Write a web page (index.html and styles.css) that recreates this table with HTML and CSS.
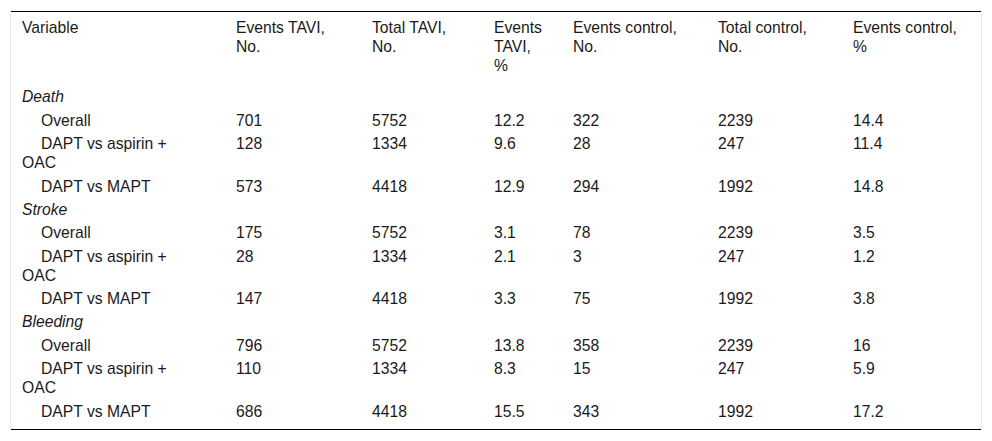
FILE: index.html
```html
<!DOCTYPE html>
<html>
<head>
<meta charset="utf-8">
<link rel="stylesheet" href="styles.css">
</head>
<body>
<div class="wrap">
<table class="data">
<colgroup>
<col class="c1"><col class="c2"><col class="c3"><col class="c4"><col class="c5"><col class="c6"><col class="c7">
</colgroup>
<thead>
<tr><th>Variable</th><th>Events TAVI, No.</th><th>Total TAVI, No.</th><th>Events TAVI, %</th><th>Events control, No.</th><th>Total control, No.</th><th>Events control, %</th></tr>
</thead>
<tbody>
<tr class="cat"><td><em>Death</em></td><td></td><td></td><td></td><td></td><td></td><td></td></tr>
<tr><td class="sub">Overall</td><td>701</td><td>5752</td><td>12.2</td><td>322</td><td>2239</td><td>14.4</td></tr>
<tr><td class="sub">DAPT vs aspirin + OAC</td><td>128</td><td>1334</td><td>9.6</td><td>28</td><td>247</td><td>11.4</td></tr>
<tr><td class="sub">DAPT vs MAPT</td><td>573</td><td>4418</td><td>12.9</td><td>294</td><td>1992</td><td>14.8</td></tr>
<tr class="cat"><td><em>Stroke</em></td><td></td><td></td><td></td><td></td><td></td><td></td></tr>
<tr><td class="sub">Overall</td><td>175</td><td>5752</td><td>3.1</td><td>78</td><td>2239</td><td>3.5</td></tr>
<tr><td class="sub">DAPT vs aspirin + OAC</td><td>28</td><td>1334</td><td>2.1</td><td>3</td><td>247</td><td>1.2</td></tr>
<tr><td class="sub">DAPT vs MAPT</td><td>147</td><td>4418</td><td>3.3</td><td>75</td><td>1992</td><td>3.8</td></tr>
<tr class="cat"><td><em>Bleeding</em></td><td></td><td></td><td></td><td></td><td></td><td></td></tr>
<tr><td class="sub">Overall</td><td>796</td><td>5752</td><td>13.8</td><td>358</td><td>2239</td><td>16</td></tr>
<tr><td class="sub">DAPT vs aspirin + OAC</td><td>110</td><td>1334</td><td>8.3</td><td>15</td><td>247</td><td>5.9</td></tr>
<tr class="last"><td class="sub">DAPT vs MAPT</td><td>686</td><td>4418</td><td>15.5</td><td>343</td><td>1992</td><td>17.2</td></tr>
</tbody>
</table>
</div>
</body>
</html>
```

FILE: styles.css
```css
html, body {
  margin: 0;
  padding: 0;
  background: #fff;
}
body {
  padding: 11px 10px 0 10px;
  font-family: "Liberation Sans", Arial, sans-serif;
  font-size: 15.7px;
  color: #1a1a1a;
}
.wrap {
  width: 970px;
  border-left: 1px solid #e6e6e6;
  border-right: 1px solid #e6e6e6;
}
.data {
  width: 970px;
  table-layout: fixed;
  border-collapse: collapse;
  border-top: 1px solid #000;
  border-bottom: 1px solid #000;
}
.c1 { width: 214px; }
.c2 { width: 136px; }
.c3 { width: 122px; }
.c4 { width: 79px; }
.c5 { width: 145px; }
.c6 { width: 135px; }
.c7 { width: 139px; }
.data th,
.data td {
  text-align: left;
  vertical-align: top;
  font-weight: normal;
  line-height: 19px;
  padding: 2.2px 15px 2.2px 11px;
}
.data th {
  padding-top: 6px;
  padding-bottom: 10.3px;
}
.data th:first-child,
.data td:first-child {
  padding-right: 40px;
}
.data td.sub {
  text-indent: 19px;
}
.data tr.last td {
  padding-bottom: 8px;
}
```
